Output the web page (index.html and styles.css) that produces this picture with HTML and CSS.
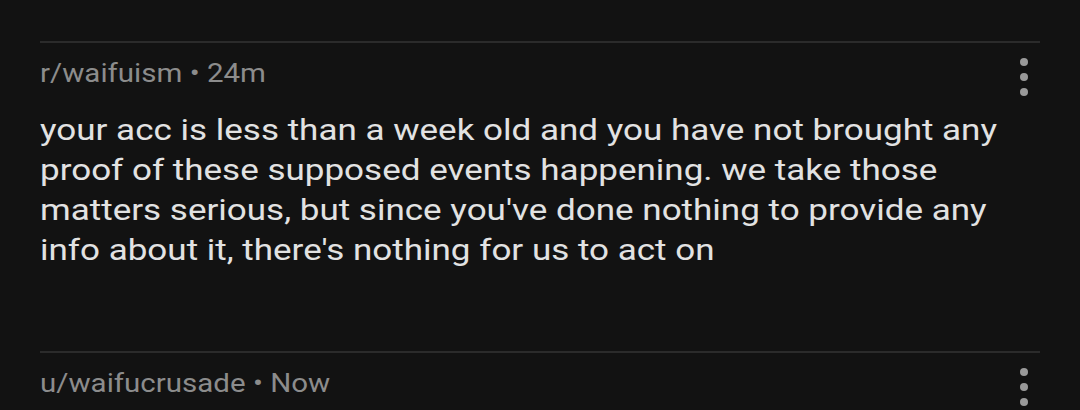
FILE: index.html
```html
<!DOCTYPE html>
<html lang="en">
<head>
  <meta charset="UTF-8" />
  <meta name="viewport" content="width=device-width, initial-scale=1" />
  <title>Comments</title>
  <link rel="stylesheet" href="styles.css">
</head>
<body>

  <div class="thread">

    <div class="comment">
      <div class="meta">r/waifuism • 24m</div>
      <button class="menu" aria-label="More options">
        <span></span><span></span><span></span>
      </button>
      <p class="text">
        your acc is less than a week old and you have not brought any
        proof of these supposed events happening. we take those
        matters serious, but since you've done nothing to provide any
        info about it, there's nothing for us to act on
      </p>
    </div>

    <div class="comment">
      <div class="meta">u/waifucrusade • Now</div>
      <button class="menu" aria-label="More options">
        <span></span><span></span><span></span>
      </button>
    </div>

  </div>

</body>
</html>
```

FILE: styles.css
```css
html, body {
  margin: 0; padding: 0;
  background: #121212;
  font-family: Roboto, 'Noto Sans', sans-serif;
  overflow: hidden;
}

.thread {
  padding: 41px 40px 0;
}

/* One comment: divider on top, meta row, menu on the right */
.comment {
  display: grid;
  grid-template-columns: 1fr auto;
  border-top: 2px solid #2b2b2b;
  padding-top: 16px;
  margin-bottom: 81px;
}

.comment:last-child {
  margin-bottom: 0;
}

/* the screenshot's text is a bit wider than plain Roboto */
.meta {
  grid-column: 1;
  justify-self: start;
  color: #8c8c8c;
  font-size: 25px;
  line-height: 30px;
  transform: scaleX(1.18);
  transform-origin: left top;
}

.menu {
  grid-column: 2;
  grid-row: 1 / span 2;
  align-self: start;
  display: flex;
  flex-direction: column;
  gap: 7px;
  margin: -1px 12px 0 0;
  padding: 0;
  background: transparent;
  border: 0;
  cursor: pointer;
}

.menu span {
  width: 8px;
  height: 8px;
  border-radius: 50%;
  background: #9a9a9a;
}

.text {
  grid-column: 1;
  justify-self: start;
  margin: 21px 0 0;
  color: #e2e2e2;
  font-size: 30px;
  line-height: 40px;
  max-width: 830px;
  transform: scaleX(1.167);
  transform-origin: left top;
}
```
